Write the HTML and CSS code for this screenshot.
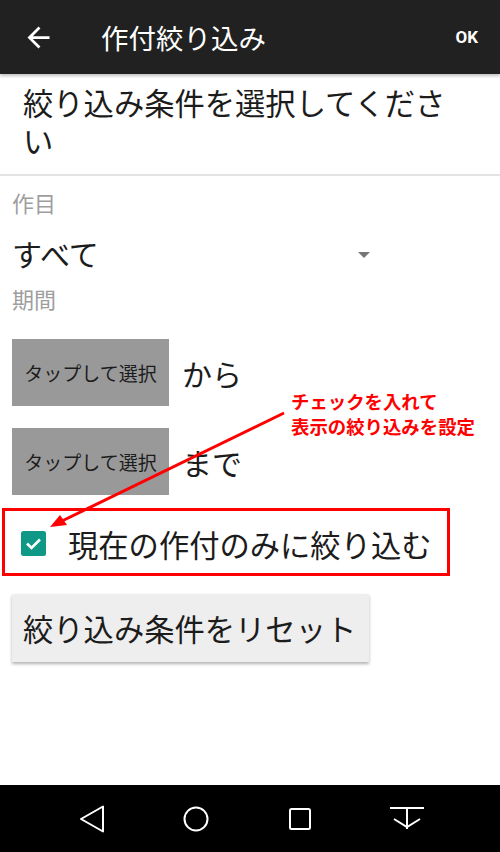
FILE: index.html
```html
<!DOCTYPE html>
<html lang="ja">
<head>
  <meta charset="UTF-8" />
  <meta name="viewport" content="width=device-width, initial-scale=1.0" />
  <title>作付絞り込み</title>
  <link rel="stylesheet" href="styles.css">
</head>
<body>
  <div class="screen">
    <header class="appbar">
      <svg class="back" viewBox="0 0 24 24"><path d="M20 11H7.83l5.59-5.59L12 4l-8 8 8 8 1.41-1.41L7.83 13H20v-2z" fill="#fff"/></svg>
      <h1 class="title">作付絞り込み</h1>
      <span class="ok">OK</span>
    </header>

    <div class="prompt">絞り込み条件を選択してください</div>

    <main class="form">
      <div class="label">作目</div>
      <div class="spinner">
        <span>すべて</span>
        <svg class="caret" viewBox="0 0 12 6"><path d="M0 0h12L6 6z" fill="#777"/></svg>
      </div>

      <div class="label period">期間</div>
      <div class="date-row">
        <button class="pick">タップして選択</button>
        <span class="suffix">から</span>
      </div>
      <div class="date-row">
        <button class="pick">タップして選択</button>
        <span class="suffix">まで</span>
      </div>

      <div class="callout">
        <svg class="check" viewBox="0 0 25 25">
          <rect width="25" height="25" rx="2.5" fill="#0f9886"/>
          <path d="M6 12.5l4.5 4.5 8.5-8.5" fill="none" stroke="#fff" stroke-width="2.6"/>
        </svg>
        <span class="check-label">現在の作付のみに絞り込む</span>
      </div>

      <button class="reset">絞り込み条件をリセット</button>
    </main>

    <nav class="navbar">
      <svg viewBox="0 0 26 28"><path d="M24 1.5v25L2 14z" fill="none" stroke="#fff" stroke-width="2" stroke-linejoin="round"/></svg>
      <svg viewBox="0 0 28 28"><circle cx="14" cy="14" r="11.5" fill="none" stroke="#fff" stroke-width="2"/></svg>
      <svg viewBox="0 0 24 24"><rect x="2" y="2" width="20" height="20" rx="1.5" fill="none" stroke="#fff" stroke-width="2"/></svg>
      <svg viewBox="0 0 36 26"><path d="M1 2h34M18 2v21M5 13l13 8 13-8" fill="none" stroke="#fff" stroke-width="2"/></svg>
    </nav>

    <!-- annotation over the screenshot -->
    <div class="note">チェックを入れて<br>表示の絞り込みを設定</div>
    <svg class="pointer" viewBox="0 0 500 852">
      <line x1="284" y1="413" x2="62" y2="521" stroke="#f00" stroke-width="3"/>
      <path d="M50 527l10-12 7 10z" fill="#f00"/>
    </svg>
  </div>
</body>
</html>
```

FILE: styles.css
```css
* {
  box-sizing: border-box;
}
body {
  margin: 0;
  background: #fff;
  font-family: Roboto, "Noto Sans CJK JP", sans-serif;
  color: #1c1c1c;
}
.screen {
  position: relative;
  width: 500px;
  height: 852px;
  display: flex;
  flex-direction: column;
  overflow: hidden;
}
.appbar {
  height: 74px;
  background: #212121;
  display: flex;
  align-items: center;
  padding: 0 22px 0 22px;
  box-shadow: 0 2px 3px rgba(0,0,0,0.25);
  position: relative;
  z-index: 1;
}
.back {
  width: 33px;
  height: 33px;
}
.title {
  margin: 0 0 0 46px;
  font-size: 27.5px;
  font-weight: normal;
  color: #fff;
  flex: 1;
}
.ok {
  font-size: 17px;
  font-weight: bold;
  color: #fff;
}
.prompt {
  font-size: 30.3px;
  line-height: 38px;
  padding: 12px 30px 12px 23px;
  border-bottom: 2px solid #e3e3e3;
}
.form {
  flex: 1;
  padding: 0 12px;
}
.label {
  font-size: 22px;
  line-height: 30px;
  color: #9e9e9e;
  margin-top: 14px;
}
.label.period {
  margin-top: 9px;
}
.spinner {
  width: 358px;
  height: 48px;
  margin-top: 9px;
  display: flex;
  align-items: center;
  justify-content: space-between;
  font-size: 30px;
}
.caret {
  width: 12px;
  height: 6px;
  margin-top: 4px;
}
.date-row {
  display: flex;
  align-items: center;
  margin-top: 23px;
}
.date-row + .date-row {
  margin-top: 22px;
}
.pick {
  width: 157px;
  height: 67px;
  border: none;
  background: #999;
  font-family: inherit;
  font-size: 19px;
  color: #1c1c1c;
  padding: 0;
}
.suffix {
  font-size: 30px;
  margin-left: 13px;
}
.callout {
  display: flex;
  align-items: center;
  height: 68px;
  width: 448px;
  margin: 13px 0 0 -10px;
  border: 3px solid #f00;
  padding: 3px 0 0 16px;
}
.check {
  width: 25px;
  height: 25px;
}
.check-label {
  font-size: 30.3px;
  margin-left: 22px;
}
.reset {
  display: block;
  width: 357px;
  height: 68px;
  margin-top: 18px;
  border: none;
  background: #eee;
  box-shadow: 0 2px 3px rgba(0,0,0,0.3);
  font-family: inherit;
  font-size: 30.3px;
  color: #1c1c1c;
  text-align: left;
  padding: 0 0 0 11px;
}
.navbar {
  height: 67px;
  background: #000;
  display: flex;
  align-items: center;
  padding: 0 75px 0 79px;
  justify-content: space-between;
}
.navbar svg:nth-child(1) { width: 26px; height: 28px; }
.navbar svg:nth-child(2) { width: 28px; height: 28px; }
.navbar svg:nth-child(3) { width: 24px; height: 24px; }
.navbar svg:nth-child(4) { width: 36px; height: 26px; }
.note {
  position: absolute;
  left: 291px;
  top: 390px;
  font-size: 18.4px;
  line-height: 25px;
  font-weight: bold;
  color: #f00;
}
.pointer {
  position: absolute;
  left: 0;
  top: 0;
  width: 500px;
  height: 852px;
  pointer-events: none;
}
```
